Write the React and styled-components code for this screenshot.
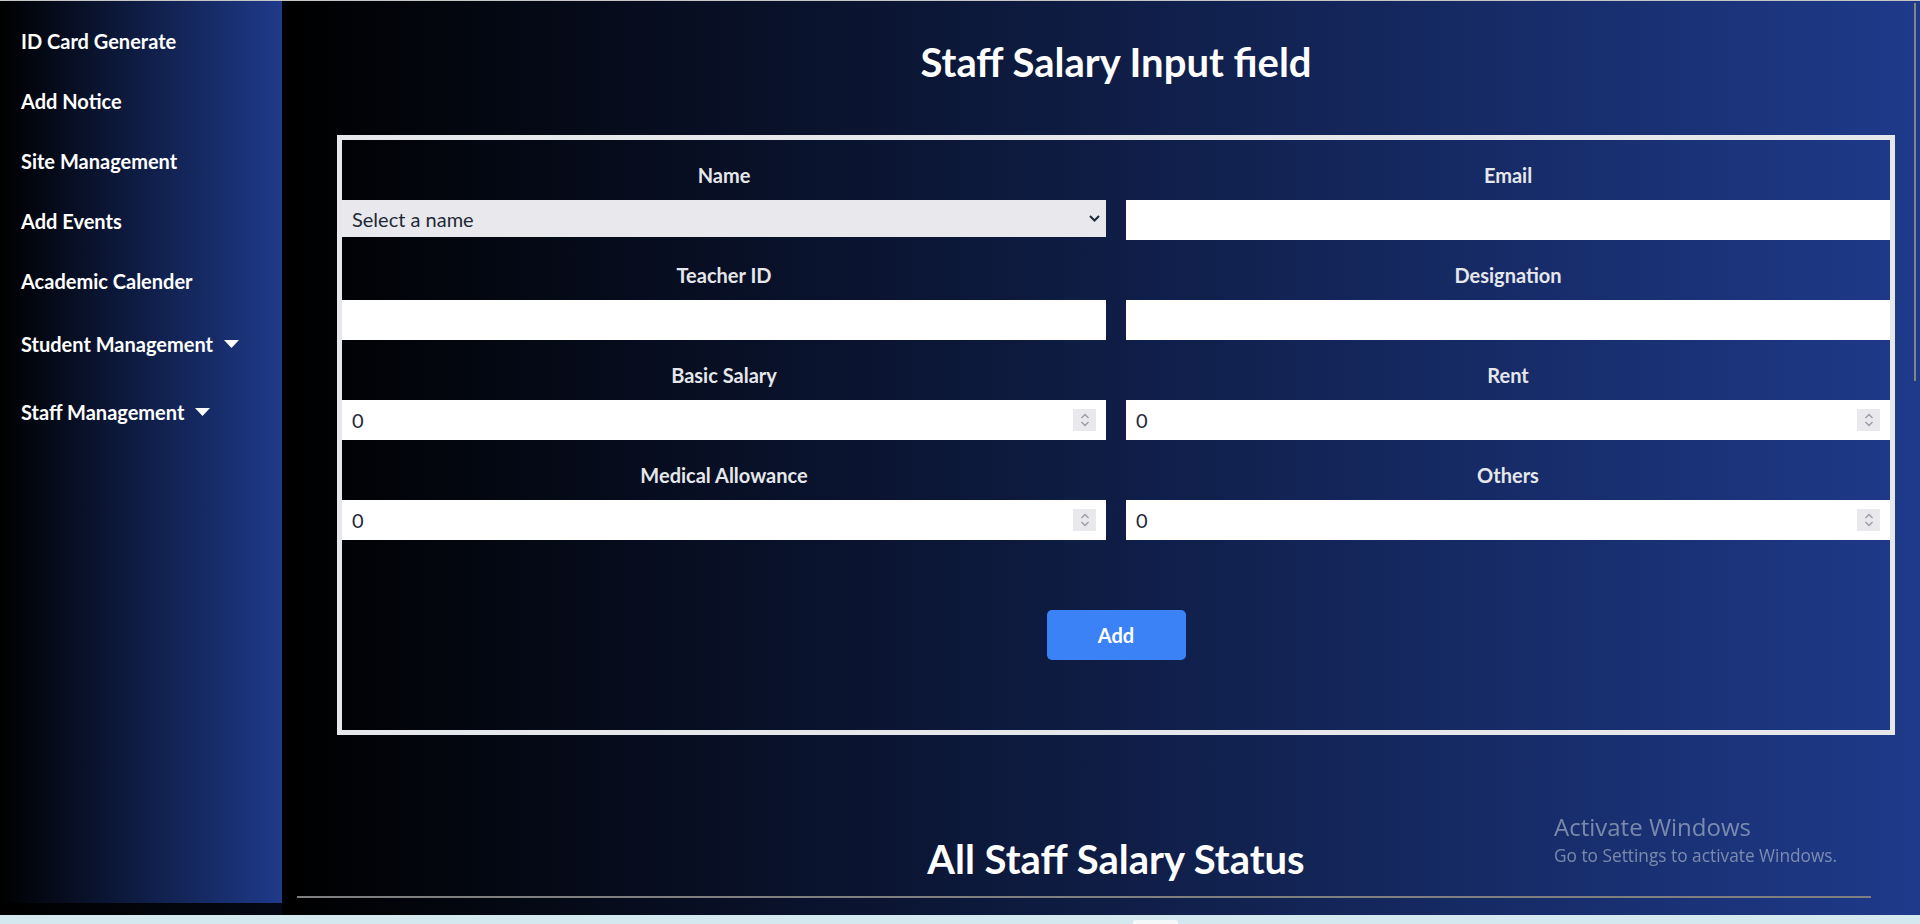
import React from "react";
import styled, { createGlobalStyle } from "styled-components";

const FONT = "Lato, 'Liberation Sans', sans-serif";

const GlobalStyle = createGlobalStyle`
  html, body {
    margin: 0;
    padding: 0;
    background: #d3e9ef;
    font-family: ${FONT};
  }
  * {
    box-sizing: border-box;
  }
`;

const navItems = [
  { label: "ID Card Generate", h: 60 },
  { label: "Add Notice", h: 60 },
  { label: "Site Management", h: 60 },
  { label: "Add Events", h: 60 },
  { label: "Academic Calender", h: 60 },
  { label: "Student Management", h: 66, caret: true },
  { label: "Staff Management", h: 70, caret: true },
];

const fields = [
  { label: "Name", kind: "select" },
  { label: "Email", kind: "text" },
  { label: "Teacher ID", kind: "text" },
  { label: "Designation", kind: "text" },
  { label: "Basic Salary", kind: "number" },
  { label: "Rent", kind: "number" },
  { label: "Medical Allowance", kind: "number" },
  { label: "Others", kind: "number" },
];

function Caret() {
  return (
    <CaretIcon width="15" height="8" viewBox="0 0 15 8">
      <polygon points="0,0 15,0 7.5,8" fill="#ffffff" />
    </CaretIcon>
  );
}

function Chevron() {
  return (
    <ChevronIcon width="11" height="7" viewBox="0 0 11 7">
      <polyline
        points="1,1 5.5,5.5 10,1"
        fill="none"
        stroke="#1f2937"
        strokeWidth="2"
      />
    </ChevronIcon>
  );
}

function Spinner() {
  return (
    <SpinBox>
      <svg width="10" height="16" viewBox="0 0 10 16">
        <polyline points="1.5,6 5,2.5 8.5,6" fill="none" stroke="#9a9aa6" strokeWidth="1.3" />
        <polyline points="1.5,10 5,13.5 8.5,10" fill="none" stroke="#9a9aa6" strokeWidth="1.3" />
      </svg>
    </SpinBox>
  );
}

function FieldControl({ kind }) {
  if (kind === "select") {
    return (
      <SelectWrap>
        <Select defaultValue="">
          <option value="">Select a name</option>
        </Select>
        <Chevron />
      </SelectWrap>
    );
  }
  if (kind === "number") {
    return (
      <NumberWrap>
        <Input type="number" defaultValue={0} />
        <Spinner />
      </NumberWrap>
    );
  }
  return <Input type="text" />;
}

export default function App() {
  return (
    <>
      <GlobalStyle />
      <Layout>
        <Sidebar>
          <NavList>
            {navItems.map((item) => (
              <NavItem key={item.label} $h={item.h}>
                <span>{item.label}</span>
                {item.caret && <Caret />}
              </NavItem>
            ))}
          </NavList>
        </Sidebar>
        <Main>
          <Heading>Staff Salary Input field</Heading>
          <FormBox>
            <FieldGrid>
              {fields.map((f) => (
                <Field key={f.label}>
                  <Label>{f.label}</Label>
                  <FieldControl kind={f.kind} />
                </Field>
              ))}
            </FieldGrid>
            <Actions>
              <AddButton type="button">Add</AddButton>
            </Actions>
          </FormBox>
          <StatusHeading>All Staff Salary Status</StatusHeading>
          <Divider />
        </Main>
        <ScrollThumb />
      </Layout>
      <BottomStrip>
        <Tab />
      </BottomStrip>
      <Watermark>
        <WatermarkTitle>Activate Windows</WatermarkTitle>
        <WatermarkText>Go to Settings to activate Windows.</WatermarkText>
      </Watermark>
    </>
  );
}

const Layout = styled.div`
  position: relative;
  display: flex;
  align-items: flex-start;
  height: 915px;
  border-top: 1px solid #c6c6c6;
  background: linear-gradient(to right, #000000, #1e3a8a);
  overflow: hidden;
`;

const Sidebar = styled.aside`
  flex: 0 0 282px;
  width: 282px;
  height: 902px;
  padding-top: 10px;
  background: linear-gradient(to right, #000000, #1e3a8a);
`;

const NavList = styled.ul`
  list-style: none;
  margin: 0;
  padding: 0;
`;

const NavItem = styled.li`
  height: ${({ $h }) => $h}px;
  display: flex;
  align-items: center;
  gap: 11px;
  padding-left: 21px;
  color: #ffffff;
  font-size: 20px;
  font-weight: 700;
  cursor: pointer;
`;

const CaretIcon = styled.svg`
  display: block;
  flex-shrink: 0;
`;

const Main = styled.main`
  flex: 1;
  height: 914px;
  background: linear-gradient(to right, #000000, #1e3a8a);
`;

const ScrollThumb = styled.div`
  position: absolute;
  right: 4px;
  top: 2px;
  width: 2px;
  height: 378px;
  background: #858585;
`;

const Heading = styled.h1`
  margin: 37px 25px 49px 55px;
  font-size: 40px;
  line-height: 48px;
  font-weight: 700;
  color: #ffffff;
  text-align: center;
`;

const FormBox = styled.form`
  margin: 0 25px 0 55px;
  border: 5px solid #e5e7eb;
`;

const FieldGrid = styled.div`
  display: grid;
  grid-template-columns: 1fr 1fr;
  column-gap: 20px;
`;

const Field = styled.div`
  display: flex;
  flex-direction: column;
`;

const Label = styled.label`
  display: block;
  height: 60px;
  padding: 20px 0 10px;
  line-height: 30px;
  font-size: 20px;
  font-weight: 700;
  color: #e5e7eb;
  text-align: center;
`;

const Input = styled.input`
  display: block;
  width: 100%;
  height: 40px;
  margin: 0;
  padding: 0 10px;
  border: none;
  outline: none;
  background: #ffffff;
  color: #1e293b;
  font-family: ${FONT};
  font-size: 20px;
  appearance: textfield;
  -moz-appearance: textfield;

  &::-webkit-outer-spin-button,
  &::-webkit-inner-spin-button {
    -webkit-appearance: none;
    margin: 0;
  }
`;

const SelectWrap = styled.div`
  position: relative;
  height: 40px;
`;

const Select = styled.select`
  display: block;
  width: 100%;
  height: 37px;
  margin: 0;
  padding: 0 10px;
  border: none;
  border-radius: 0;
  outline: none;
  background: #e8e8ed;
  color: #1f2937;
  font-family: ${FONT};
  font-size: 20px;
  appearance: none;
  -webkit-appearance: none;
`;

const ChevronIcon = styled.svg`
  position: absolute;
  right: 6px;
  top: 15px;
  pointer-events: none;
`;

const NumberWrap = styled.div`
  position: relative;
`;

const SpinBox = styled.div`
  position: absolute;
  right: 10px;
  top: 9px;
  width: 23px;
  height: 22px;
  display: flex;
  align-items: center;
  justify-content: center;
  background: #e8e8ed;
  pointer-events: none;
`;

const Actions = styled.div`
  display: flex;
  justify-content: center;
  padding: 70px 0;
`;

const AddButton = styled.button`
  width: 139px;
  height: 50px;
  border: none;
  border-radius: 5px;
  background: #3b82f6;
  color: #ffffff;
  font-family: ${FONT};
  font-size: 20px;
  font-weight: 700;
  cursor: pointer;
`;

const StatusHeading = styled.h2`
  margin: 100px 25px 0 55px;
  font-size: 40px;
  line-height: 48px;
  font-weight: 700;
  color: #ffffff;
  text-align: center;
`;

const Divider = styled.hr`
  height: 2px;
  margin: 13px 49px 0 15px;
  border: none;
  background: #7f7f7f;
`;

const BottomStrip = styled.div`
  height: 9px;
  display: flex;
  align-items: flex-end;
  background: #d3e9ef;
  overflow: hidden;
`;

const Tab = styled.div`
  width: 45px;
  height: 4px;
  margin-left: 1133px;
  border-radius: 3px 3px 0 0;
  background: #f4f8f9;
`;

const Watermark = styled.div`
  position: fixed;
  left: 1554px;
  top: 810px;
  color: rgba(190, 196, 210, 0.6);
  pointer-events: none;
`;

const WatermarkTitle = styled.div`
  font-family: "Open Sans", ${FONT};
  font-size: 24px;
  line-height: 33px;
`;

const WatermarkText = styled.div`
  font-family: "Open Sans", ${FONT};
  font-size: 17.3px;
  line-height: 25px;
`;
